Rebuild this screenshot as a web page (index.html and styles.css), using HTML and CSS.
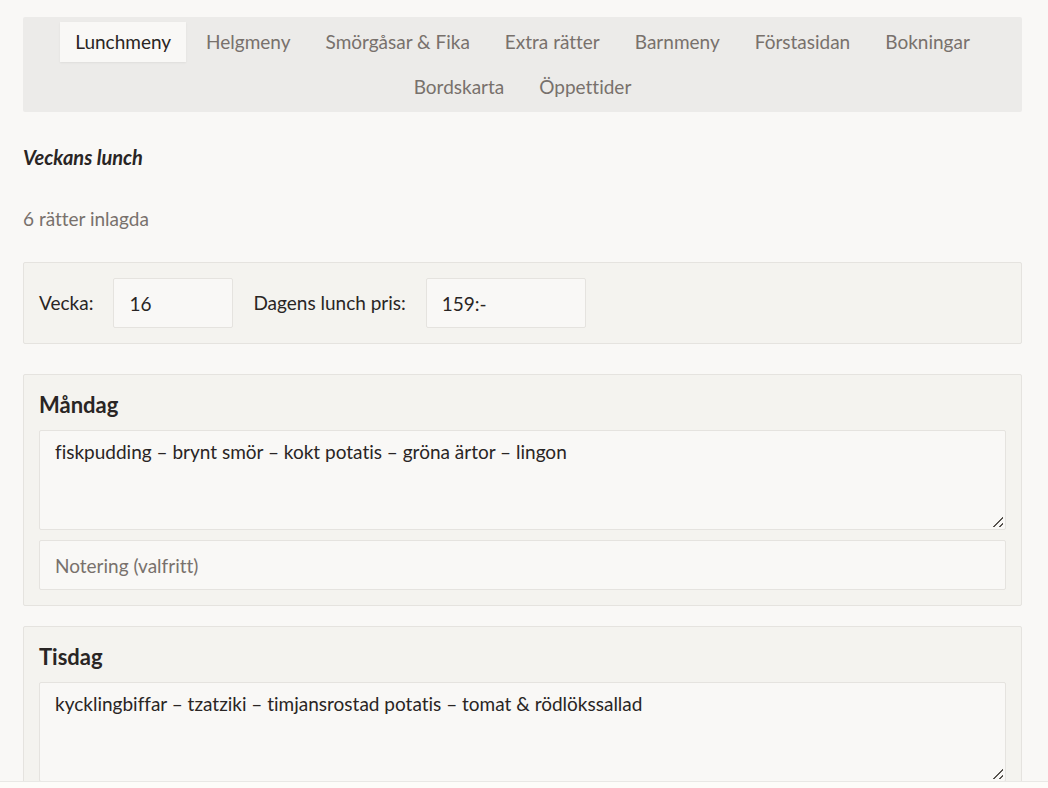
FILE: index.html
```html
<!DOCTYPE html>
<html lang="sv">
<head>
<meta charset="utf-8">
<meta name="viewport" content="width=device-width, initial-scale=1">
<title>Veckans lunch</title>
<link rel="stylesheet" href="styles.css">
</head>
<body>
<main class="page">
  <nav class="tabs">
    <button class="tab tab-active" type="button">Lunchmeny</button>
    <button class="tab" type="button">Helgmeny</button>
    <button class="tab" type="button">Smörgåsar &amp; Fika</button>
    <button class="tab" type="button">Extra rätter</button>
    <button class="tab" type="button">Barnmeny</button>
    <button class="tab" type="button">Förstasidan</button>
    <button class="tab" type="button">Bokningar</button>
    <button class="tab" type="button">Bordskarta</button>
    <button class="tab" type="button">Öppettider</button>
  </nav>
  <header class="intro">
    <h1 class="title">Veckans lunch</h1>
    <p class="count">6 rätter inlagda</p>
  </header>
  <section class="card settings">
    <label for="week">Vecka:</label>
    <input class="field field-week" id="week" type="text" value="16">
    <label for="price">Dagens lunch pris:</label>
    <input class="field field-price" id="price" type="text" value="159:-">
  </section>
  <div class="days">
    <section class="card day">
      <h2 class="day-name" id="monday">Måndag</h2>
      <textarea class="field dish" aria-labelledby="monday">fiskpudding – brynt smör – kokt potatis – gröna ärtor – lingon</textarea>
      <input class="field" type="text" placeholder="Notering (valfritt)" aria-label="Notering måndag">
    </section>
    <section class="card day">
      <h2 class="day-name" id="tuesday">Tisdag</h2>
      <textarea class="field dish" aria-labelledby="tuesday">kycklingbiffar – tzatziki – timjansrostad potatis – tomat &amp; rödlökssallad</textarea>
      <input class="field" type="text" placeholder="Notering (valfritt)" aria-label="Notering tisdag">
    </section>
  </div>
</main>
<footer class="bottom-bar"></footer>
</body>
</html>
```
FILE: styles.css
```css
* { box-sizing: border-box; }

html { scrollbar-width: none; }

body {
  margin: 0;
  background: #f9f8f6;
  color: #292524;
  font: 19px/30px Lato, sans-serif;
  font-variant-ligatures: none;
}

.page { padding: 17px 26px 30px 23px; }

.tabs {
  display: flex;
  flex-wrap: wrap;
  justify-content: center;
  gap: 5px;
  padding: 5px;
  border-radius: 2px;
  background: #ecebe9;
}

.tab {
  padding: 5px 15px;
  border: 0;
  background: transparent;
  color: #78716c;
  font: inherit;
  font-variant-ligatures: none;
}

.tab-active {
  background: #f9f8f6;
  color: #292524;
  box-shadow: 0 1px 2px rgba(0, 0, 0, 0.06);
}

.intro { padding: 30px 0 28px; }

.title {
  margin: 0 0 32px;
  font: italic bold 20px/30px Lato, cursive;
}

.count { margin: 0; color: #78716c; }

.card {
  padding: 15px;
  border: 1px solid #e5e3df;
  border-radius: 2px;
  background: #f4f3ef;
}

.settings {
  display: flex;
  flex-wrap: wrap;
  align-items: center;
  gap: 20px;
  margin-bottom: 30px;
}

.field {
  width: 100%;
  height: 50px;
  padding: 0 15px;
  border: 1px solid #e5e3df;
  border-radius: 2px;
  background: #f9f8f6;
  color: #292524;
  font: inherit;
  font-variant-ligatures: none;
}

.field::placeholder { color: #78716c; opacity: 1; }

.field-week { width: 120px; }

.field-price { width: 160px; }

.days,
.day {
  display: flex;
  flex-direction: column;
}

.days { gap: 20px; }

.day { gap: 10px; }

.day-name { margin: 0; font: bold 22px/30px Lato, sans-serif; }

.dish {
  height: 100px;
  padding: 6px 15px;
  resize: vertical;
}

.dish::-webkit-resizer {
  background:
    linear-gradient(135deg, transparent 46%, #57534e 46%, #57534e 58%, transparent 58%, transparent 76%, #57534e 76%, #57534e 88%, transparent 88%)
    3px 3px / 10px 10px no-repeat;
}

.bottom-bar {
  position: fixed;
  right: 0;
  bottom: 0;
  left: 0;
  height: 7px;
  border-top: 1px solid #e9e8e5;
  background: #fdfcf9;
}
```
